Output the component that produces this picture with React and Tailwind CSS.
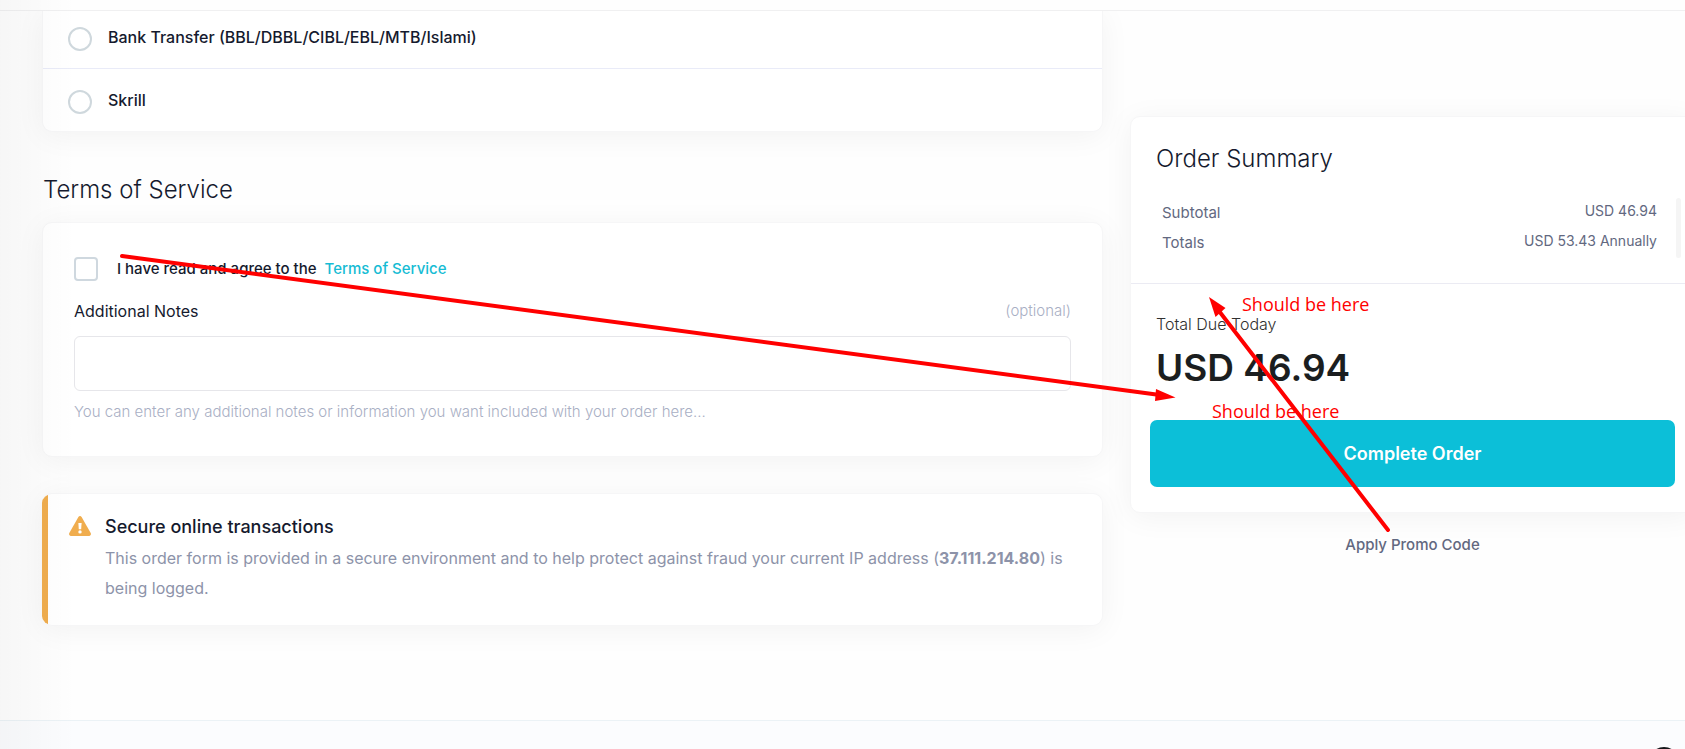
const card =
  "bg-white border border-[#f6f6f7] rounded-[10px] shadow-[0_4px_30px_rgba(0,0,0,0.05)]";

function PaymentOption({ id, label, className }) {
  return (
    <div className={`flex items-center gap-4 px-[25px] ${className}`}>
      <input
        id={id}
        type="radio"
        name="payment"
        className="mt-1 size-6 shrink-0 appearance-none rounded-full border-2 border-[#cfd8dd] bg-white checked:border-[#0cbfd8]"
      />
      <label htmlFor={id} className="text-base leading-6 font-medium text-[#151a2e]">
        {label}
      </label>
    </div>
  );
}

function WarningIcon() {
  return (
    <svg viewBox="0 0 22 20" className="mt-[5px] h-5 w-[22px] shrink-0" aria-hidden="true">
      <path
        d="M9.4.9a1.9 1.9 0 0 1 3.2 0l9.1 16.2c.7 1.3-.1 2.9-1.6 2.9H1.9C.4 20-.4 18.400.3 17.100Z"
        fill="#f0ad4e"
      />
      <path d="M9.400 7h3.200l-.4 6.200h-2.400Z" fill="#fff" />
      <circle cx="11" cy="15.900" r="1.700" fill="#fff" />
    </svg>
  );
}

function SummaryRow({ label, value }) {
  return (
    <div className="flex justify-between text-[#626880]">
      <dt className="text-[15px] leading-[30px]">{label}</dt>
      <dd className="text-sm leading-[26px]">{value}</dd>
    </div>
  );
}

function Annotations() {
  return (
    <div className="pointer-events-none absolute inset-0 font-['Open_Sans',sans-serif] text-lg leading-5 text-[#ff0000]">
      <svg width="1685" height="749" viewBox="0 0 1685 749" className="absolute top-0 left-0" aria-hidden="true">
        <g stroke="#ff0000" strokeWidth="4" strokeLinecap="round">
          <path d="M122 256 1160 395" />
          <path d="M1388 530 1219 311" />
        </g>
        <path d="M1175.500 397.500 1156 389 1155 401Z" fill="#ff0000" />
        <path d="M1209 297 1225.500 308 1215.500 317Z" fill="#ff0000" />
      </svg>
      <span className="absolute top-[294px] left-[1242px] whitespace-nowrap">Should be here</span>
      <span className="absolute top-[401px] left-[1212px] whitespace-nowrap">Should be here</span>
    </div>
  );
}

export default function App() {
  return (
    <div className="relative flex min-h-screen flex-col overflow-hidden bg-[#fefefe] font-['Inter',sans-serif] text-[#151a2e]">
      <header className="relative z-10 h-[11px] border-b border-[#f0f0f1] bg-[#fefefe]" />

      <main className="flex grow gap-[27px] pl-[42px]">
        <div className="min-w-0 grow">
          <section className={`${card} rounded-t-none border-t-0`}>
            <PaymentOption id="bank" label="Bank Transfer (BBL/DBBL/CIBL/EBL/MTB/Islami)" className="h-[58px] border-b border-[#e9ebf8] pb-[6px]" />
            <PaymentOption id="skrill" label="Skrill" className="h-[62px]" />
          </section>

          <h2 className="mt-10 mb-[14px] pl-px text-2xl leading-9 font-light">Terms of Service</h2>

          <section className={`${card} px-[31px] pt-[34px] pb-[30px]`}>
            <div className="flex items-center">
              <input
                id="agree"
                type="checkbox"
                className="size-6 shrink-0 appearance-none rounded-[4px] border-2 border-[#cfd8df] bg-white checked:bg-[#0cbfd8]"
              />
              <label htmlFor="agree" className="ml-[19px] text-[15px] leading-6 font-medium">
                I have read and agree to the
              </label>
              <a href="#terms" className="ml-2 text-[15px] leading-6 font-medium text-[#16bcd4]">
                Terms of Service
              </a>
            </div>
            <div className="mt-[18px] flex items-center justify-between">
              <label htmlFor="notes" className="text-base leading-6">
                Additional Notes
              </label>
              <span className="text-[15px] leading-6 font-light text-[#a9afc4]">(optional)</span>
            </div>
            <input
              id="notes"
              type="text"
              className="mt-[13px] block h-[55px] w-full rounded-[6px] border border-[#e6e6ea] bg-white px-4 text-base"
            />
            <p className="mt-[7px] text-[15px] leading-7 font-light text-[#a9afc4]">
              You can enter any additional notes or information you want included with your order here...
            </p>
          </section>

          <section className={`${card} mt-9 flex overflow-hidden border-l-0`}>
            <div className="w-[6px] shrink-0 bg-[#f0ad4e]" />
            <div className="flex gap-[14px] pt-[17px] pr-5 pb-[22px] pl-[21px]">
              <WarningIcon />
              <div>
                <h3 className="text-lg leading-8 font-medium">Secure online transactions</h3>
                <p className="text-base leading-[30px] text-[#8d93a9]">
                  This order form is provided in a secure environment and to help protect against fraud your current IP
                  address (<b className="font-bold">37.111.214.80</b>) is being logged.
                </p>
              </div>
            </div>
          </section>
        </div>

        <aside className="-mr-[10px] w-[565px] shrink-0 pt-[105px]">
          <section className={`${card} border-[#ededf0]`}>
            <div className="border-b border-[#ebebf3] pt-6 pr-[13px] pb-[25px] pl-[25px]">
              <h2 className="text-2xl leading-9 font-light">Order Summary</h2>
              <div className="mt-[21px] flex items-stretch justify-between gap-[19px] pl-[6px]">
                <dl className="grow">
                  <SummaryRow label="Subtotal" value="USD 46.94" />
                  <SummaryRow label="Totals" value="USD 53.43 Annually" />
                </dl>
                <div className="w-[5px] rounded-full bg-[#f5f5f5]" />
              </div>
            </div>
            <div className="px-[19px] pt-7 pb-[25px]">
              <p className="px-[6px] text-base leading-6 font-light text-[#303030]">Total Due Today</p>
              <p className="px-[6px] pt-2 text-[37px] leading-[48px] font-semibold text-[#1b1e20]">USD 46.94</p>
              <button type="button" className="mt-7 h-[67px] w-full rounded-[7px] bg-[#0cbfd8] text-lg font-semibold text-white">
                Complete Order
              </button>
            </div>
          </section>
          <button type="button" className="mx-auto mt-5 block text-[15px] leading-6 font-medium text-[#626880]">
            Apply Promo Code
          </button>
        </aside>
      </main>

      <footer className="flex h-[29px] items-end justify-end overflow-hidden border-t border-[#ebf2f6] bg-[#fbfcfe] pr-3">
        <svg width="18" height="2" viewBox="0 0 18 2" aria-hidden="true">
          <circle cx="9" cy="15" r="15" fill="#15171a" />
        </svg>
      </footer>

      <div className="pointer-events-none absolute inset-y-0 left-0 z-20 w-[76px] bg-linear-to-r from-black/3 to-transparent" />
      <Annotations />
    </div>
  );
}
